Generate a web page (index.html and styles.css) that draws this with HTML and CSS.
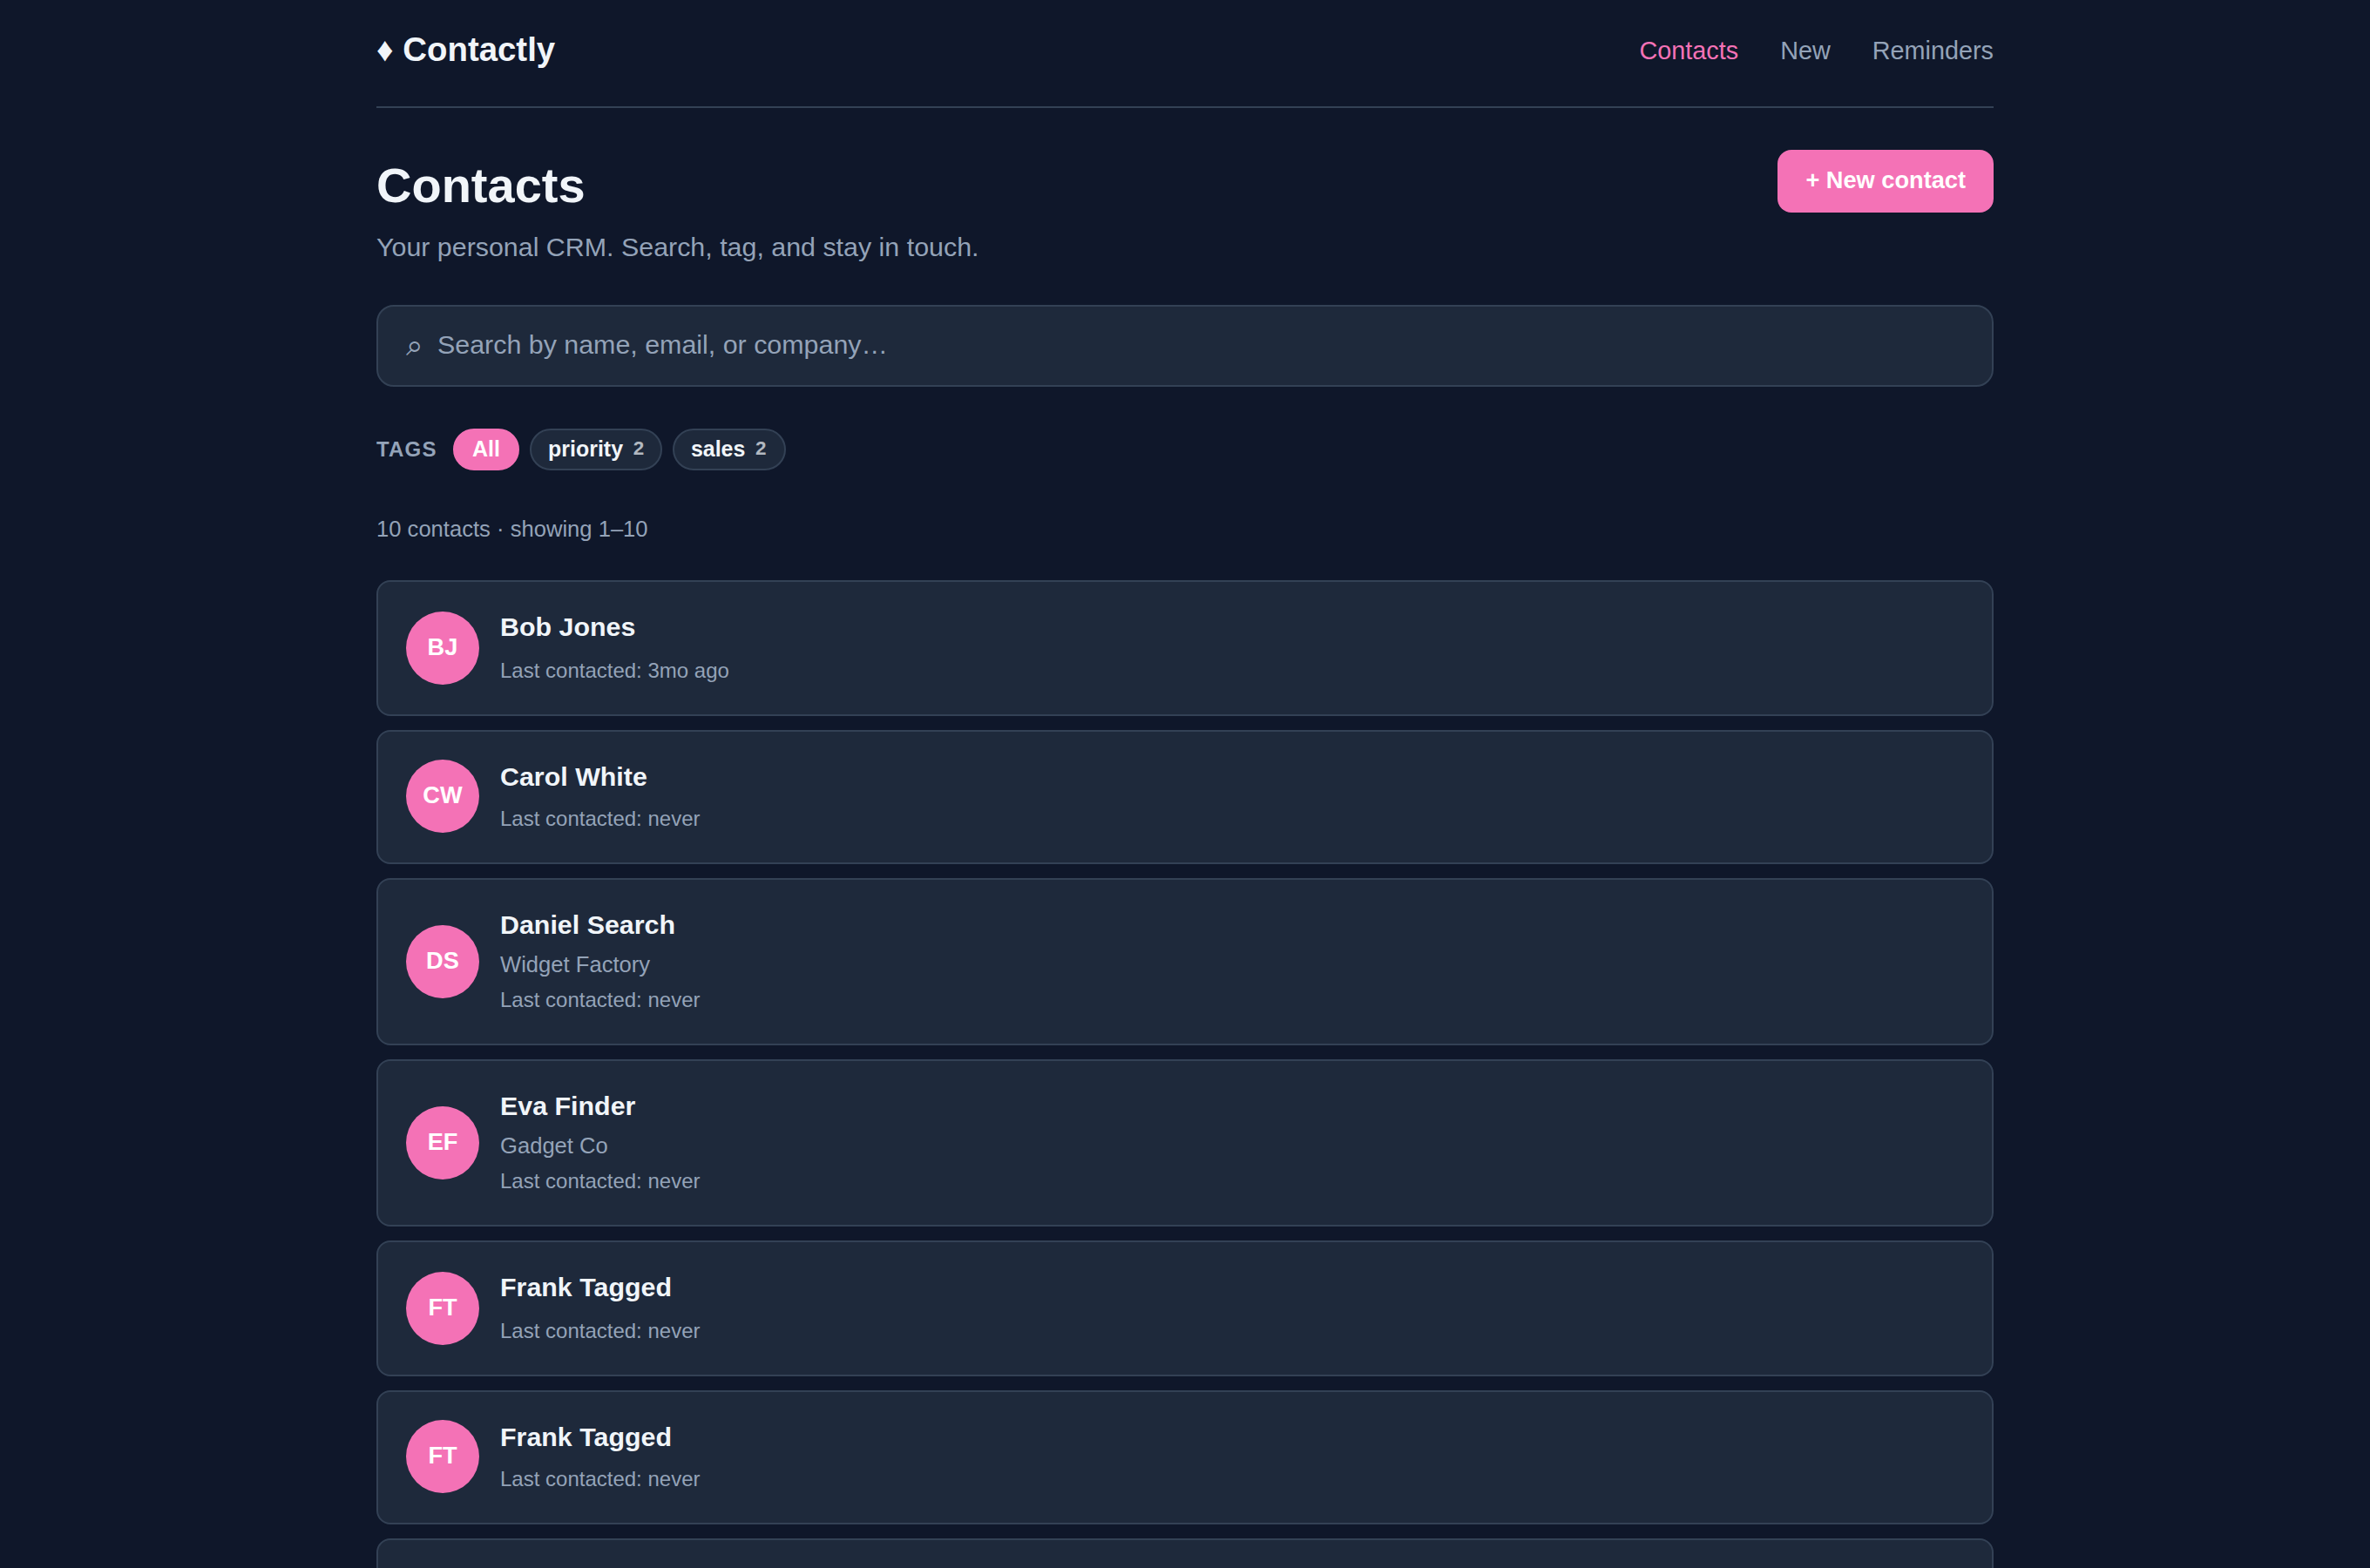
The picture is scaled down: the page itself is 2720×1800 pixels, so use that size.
FILE: index.html
```html
<!DOCTYPE html>
<html lang="en">
<head>
    <meta charset="UTF-8">
    <meta name="viewport" content="width=device-width, initial-scale=1.0">
    <title>Contactly</title>
    <link rel="stylesheet" href="styles.css">
</head>
<body>
    <div class="container">
        <header class="header">
            <a class="logo">♦ Contactly</a>
            <nav class="nav">
                <a class="active">Contacts</a>
                <a>New</a>
                <a>Reminders</a>
            </nav>
        </header>

        <div class="page-head">
            <div>
                <h1>Contacts</h1>
                <p class="subtitle">Your personal CRM. Search, tag, and stay in touch.</p>
            </div>
            <button class="btn">+ New contact</button>
        </div>

        <div class="search">
            <span class="search-icon">⌕</span>
            <span class="search-text">Search by name, email, or company…</span>
        </div>

        <div class="tags">
            <span class="tags-label">Tags</span>
            <a class="tag selected">All</a>
            <a class="tag">priority <span class="count">2</span></a>
            <a class="tag">sales <span class="count">2</span></a>
        </div>

        <p class="summary">10 contacts · showing 1–10</p>

        <div class="list">
            <div class="card">
                <div class="avatar">BJ</div>
                <div class="info">
                    <div class="name">Bob Jones</div>
                    <div class="last">Last contacted: 3mo ago</div>
                </div>
            </div>
            <div class="card short">
                <div class="avatar">CW</div>
                <div class="info">
                    <div class="name">Carol White</div>
                    <div class="last">Last contacted: never</div>
                </div>
            </div>
            <div class="card tall">
                <div class="avatar">DS</div>
                <div class="info">
                    <div class="name">Daniel Search</div>
                    <div class="company">Widget Factory</div>
                    <div class="last">Last contacted: never</div>
                </div>
            </div>
            <div class="card tall">
                <div class="avatar">EF</div>
                <div class="info">
                    <div class="name">Eva Finder</div>
                    <div class="company">Gadget Co</div>
                    <div class="last">Last contacted: never</div>
                </div>
            </div>
            <div class="card">
                <div class="avatar">FT</div>
                <div class="info">
                    <div class="name">Frank Tagged</div>
                    <div class="last">Last contacted: never</div>
                </div>
            </div>
            <div class="card short">
                <div class="avatar">FT</div>
                <div class="info">
                    <div class="name">Frank Tagged</div>
                    <div class="last">Last contacted: never</div>
                </div>
            </div>
            <div class="card"></div>
        </div>
    </div>
</body>
</html>
```
FILE: styles.css
```css
* {
    box-sizing: border-box;
}

body {
    margin: 0;
    height: 100vh;
    overflow: hidden;
    background-color: #0f172a;
    color: #f1f5f9;
    font-family: "Liberation Sans", Arial, sans-serif;
}

.container {
    width: 1856px;
    margin: 0 auto;
}

.header {
    display: flex;
    justify-content: space-between;
    align-items: center;
    height: 124px;
    padding-bottom: 8px;
    border-bottom: 2px solid #334155;
}

.logo {
    font-size: 38.4px;
    font-weight: bold;
}

.nav {
    display: flex;
    gap: 48px;
    padding-top: 2px;
    font-size: 28.8px;
    color: #94a3b8;
}

.nav .active {
    color: #f472b6;
}

.page-head {
    display: flex;
    justify-content: space-between;
    align-items: flex-start;
    margin-top: 48px;
}

h1 {
    margin: 0;
    font-size: 56px;
    line-height: 81px;
}

.subtitle {
    margin: 6px 0 42px;
    font-size: 30.4px;
    line-height: 49px;
    color: #94a3b8;
}

.btn {
    height: 72px;
    padding: 0 32px 2px;
    border: none;
    border-radius: 16px;
    background-color: #f472b6;
    color: white;
    font-family: inherit;
    font-size: 27.2px;
    font-weight: bold;
}

/* search box */
.search {
    display: flex;
    align-items: center;
    gap: 16px;
    height: 94px;
    padding: 0 32px;
    border: 2px solid #334155;
    border-radius: 20px;
    background-color: #1e293b;
    color: #94a3b8;
    font-size: 30.4px;
}

.search-icon {
    padding-bottom: 2px;
    font-size: 35.2px;
}

.search-text {
    padding-bottom: 4px;
}

/* tag filter */
.tags {
    display: flex;
    align-items: center;
    gap: 12px;
    margin-top: 48px;
}

.tags-label {
    width: 76px;
    font-size: 24px;
    font-weight: bold;
    letter-spacing: 0.05em;
    text-transform: uppercase;
    color: #94a3b8;
}

.tag {
    display: flex;
    align-items: center;
    gap: 11.6px;
    height: 48px;
    padding: 0 20px 2px;
    border: 2px solid #334155;
    border-radius: 24px;
    background-color: #1e293b;
    font-size: 24.96px;
    font-weight: bold;
}

.tag + .tag {
    min-width: 130px;
    padding: 0 18.6px 2px 19.2px;
}

.tag.selected {
    border-color: #f472b6;
    background-color: #f472b6;
    color: white;
}

.count {
    font-size: 22.4px;
    opacity: 0.7;
}

.summary {
    margin: 47px 0 38px;
    font-size: 25.6px;
    line-height: 41px;
    color: #94a3b8;
}

/* contact cards */
.list {
    display: flex;
    flex-direction: column;
    gap: 16px;
}

.card {
    display: flex;
    align-items: center;
    gap: 24px;
    height: 156px;
    padding: 0 32px;
    border: 2px solid #334155;
    border-radius: 16px;
    background-color: #1e293b;
}

.card.short {
    height: 154px;
    padding-bottom: 2px;
}

.card.tall {
    height: 192px;
}

.avatar {
    display: flex;
    justify-content: center;
    align-items: center;
    width: 84px;
    height: 84px;
    padding-bottom: 2px;
    border-radius: 50%;
    background-color: #f472b6;
    color: white;
    font-size: 27.2px;
    font-weight: bold;
}

.info {
    align-self: flex-start;
    padding-top: 28px;
}

.name {
    font-size: 30.4px;
    font-weight: bold;
    line-height: 46px;
}

.company {
    margin-top: 3px;
    font-size: 25.6px;
    line-height: 41px;
    color: #94a3b8;
}

.last {
    margin-top: 9px;
    font-size: 24px;
    line-height: 38px;
    color: #94a3b8;
}

.short .last {
    margin-top: 7px;
}

.tall .last {
    margin-top: 1px;
}
```
